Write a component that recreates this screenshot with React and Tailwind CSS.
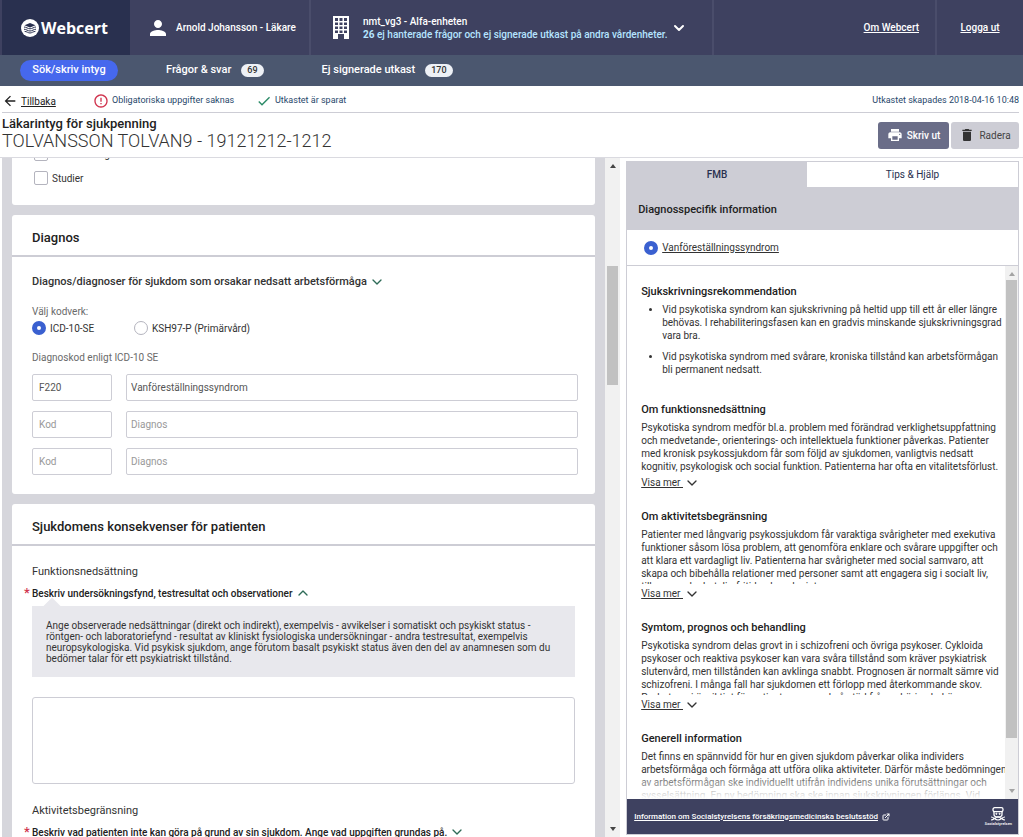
import { MdPerson, MdPrint, MdDelete, MdArrowBack, MdCheck, MdErrorOutline } from 'react-icons/md';
import { ChevronDown, ChevronUp, ExternalLink } from 'lucide-react';

const diagnoses = [
  { id: 1, code: 'F220', name: 'Vanföreställningssyndrom' },
  { id: 2, code: '', name: '' },
  { id: 3, code: '', name: '' },
];

const sections = [
  {
    title: 'Om funktionsnedsättning',
    text: `Psykotiska syndrom medför bl.a. problem med förändrad verklighetsuppfattning
och medvetande-, orienterings- och intellektuela funktioner påverkas. Patienter
med kronisk psykossjukdom får som följd av sjukdomen, vanligtvis nedsatt
kognitiv, psykologisk och social funktion. Patienterna har ofta en vitalitetsförlust.`,
  },
  {
    title: 'Om aktivitetsbegränsning',
    text: `Patienter med långvarig psykossjukdom får varaktiga svårigheter med exekutiva
funktioner såsom lösa problem, att genomföra enklare och svårare uppgifter och
att klara ett vardagligt liv. Patienterna har svårigheter med social samvaro, att
skapa och bibehålla relationer med personer samt att engagera sig i socialt liv,
till exempel arbetsliv, fritid och andra intressen.`,
  },
  {
    title: 'Symtom, prognos och behandling',
    text: `Psykotiska syndrom delas grovt in i schizofreni och övriga psykoser. Cykloida
psykoser och reaktiva psykoser kan vara svåra tillstånd som kräver psykiatrisk
slutenvård, men tillstånden kan avklinga snabbt. Prognosen är normalt sämre vid
schizofreni. I många fall har sjukdomen ett förlopp med återkommande skov.
Psykoterapi är viktigt för patienten men också stöd från anhöriga behövs`,
  },
];

function Logo() {
  return (
    <svg viewBox="0 0 18 18" className="h-[18px] w-[18px] shrink-0" aria-hidden="true">
      <circle cx="9" cy="9" r="9" fill="#fff" />
      <path d="M9 4 14.500 6.200 9 8.400 3.500 6.200Z" fill="#29304f" />
      <path
        d="M3 8c2 0 4 1.800 6 1.800S13 8 15 8M3 10.200c2 0 4 1.800 6 1.800s4-1.800 6-1.800M3.600 12.400c2 0 3.600 1.600 5.400 1.600s3.400-1.600 5.400-1.600"
        fill="none"
        stroke="#29304f"
        strokeWidth="1"
      />
    </svg>
  );
}

function Building() {
  return (
    <svg viewBox="0 0 16 23" className="h-[23px] w-4 shrink-0" aria-hidden="true">
      <path
        fill="#fff"
        fillRule="evenodd"
        d="M0 0h16v23h-5v-5H5v5H0ZM2 2v3h3V2ZM6.5 2v3h3V2ZM11 2v3h3V2ZM2 6.5v2.5h3V6.5ZM6.5 6.5v2.5h3V6.5ZM11 6.5v2.5h3V6.5ZM2 10.500v2.500h3v-2.500ZM6.500 10.500v2.500h3v-2.500ZM11 10.500v2.500h3v-2.500ZM2 14.500v2.500h3v-2.500ZM6.500 14.500v2.500h3v-2.500ZM11 14.500v2.500h3v-2.500Z"
      />
    </svg>
  );
}

function Crest() {
  return (
    <svg viewBox="0 0 16 14" className="h-[14px] w-4" fill="none" stroke="#fff" aria-hidden="true">
      <rect x="3" y="0.700" width="10" height="4" rx="1.600" strokeWidth="1.300" />
      <path d="M4 4.700v2.800c0 1.500 1.500 2.500 4 2.500s4-1 4-2.500V4.700" strokeWidth="1.300" />
      <circle cx="6.400" cy="6.800" r="0.600" fill="#fff" />
      <circle cx="9.600" cy="6.800" r="0.600" fill="#fff" />
      <path d="M1 10c3 0 4 3 7 3s4-3 7-3M1 13c3 0 4-3 7-3s4 3 7 3" strokeWidth="1.200" />
    </svg>
  );
}

function Radio({ label, name, checked, className = '' }) {
  return (
    <label className={`flex items-center gap-1 text-[10px] ${className}`}>
      <input
        type="radio"
        name={name}
        defaultChecked={checked}
        className="h-[14px] w-[14px] shrink-0 appearance-none rounded-full border border-[#b4b4be] bg-white checked:border-[5px] checked:border-[#3a60d0]"
      />
      {label}
    </label>
  );
}

function Checkbox({ label }) {
  return (
    <label className="flex h-6 shrink-0 items-center gap-1 text-[10px]">
      <input type="checkbox" className="h-[14px] w-[14px] shrink-0 appearance-none rounded-[2px] border border-[#b4b4be] bg-white" />
      {label}
    </label>
  );
}

function Card({ title, children }) {
  return (
    <section className="rounded-[3px] bg-white">
      <h2 className="flex h-[42px] items-center border-b-2 border-[#cdcdd5] px-5 pt-1.5 text-[13px] font-medium text-[#212121]">{title}</h2>
      {children}
    </section>
  );
}

function Question({ children, open }) {
  return (
    <div className="-ml-2 mt-[5px] flex h-4 items-center text-[10px] font-medium whitespace-nowrap text-[#212121]">
      <span className="w-2 text-[13px] leading-4 text-[#d0334d]">*</span>
      {children}
      {open ? <ChevronUp className="ml-0.5 h-4 w-4 text-[#2e6b57]" /> : <ChevronDown className="ml-0.5 h-4 w-4 text-[#2e6b57]" />}
    </div>
  );
}

export default function App() {
  return (
    <div className="flex h-screen flex-col overflow-hidden bg-white font-['Roboto',sans-serif] text-[#333]">
      <header className="flex h-[55px] shrink-0 bg-[#3e4160] text-[10px] font-medium text-white">
        <div className="ml-0.5 flex w-32 items-center gap-0.5 bg-[#29304f] pl-[19px]">
          <Logo />
          <span className="font-['Open_Sans',sans-serif] text-base font-bold">Webcert</span>
        </div>
        <div className="flex w-[181px] items-center gap-1.5 border-r-2 border-[#4a4d6b] pl-4">
          <MdPerson className="h-6 w-6" />
          <span>Arnold Johansson - Läkare</span>
        </div>
        <div className="flex w-[403px] items-center border-r-2 border-[#4a4d6b] pl-[22px]">
          <Building />
          <div className="ml-3.5 leading-[13px]">
            <div>nmt_vg3 - Alfa-enheten</div>
            <div className="text-[#b5e4ff]">
              <b>26</b> ej hanterade frågor och ej signerade utkast på andra vårdenheter.
            </div>
          </div>
          <button type="button" aria-label="Byt enhet" className="ml-1">
            <ChevronDown className="h-4 w-4" strokeWidth={3} />
          </button>
        </div>
        <div className="flex flex-1 items-center justify-end border-r-2 border-[#4a4d6b] pr-4">
          <a href="#om" className="underline">Om Webcert</a>
        </div>
        <div className="flex w-[86px] items-center justify-center">
          <a href="#logout" className="underline">Logga ut</a>
        </div>
      </header>

      <nav className="flex h-[31px] shrink-0 items-center bg-[#4b576f] pl-5 text-[11px] font-medium text-white">
        <a href="#sok" className="flex h-[21px] w-[98px] items-center justify-center rounded-full bg-[#4668ed]">Sök/skriv intyg</a>
        <a href="#fragor" className="ml-12 flex items-center gap-2.5">
          Frågor &amp; svar
          <span className="rounded-full bg-[#eef1f6] px-1.5 text-[9px] leading-[13px] text-[#333]">69</span>
        </a>
        <a href="#utkast" className="ml-[58px] flex items-center gap-2.5">
          Ej signerade utkast
          <span className="rounded-full bg-[#eef1f6] px-1.5 text-[9px] leading-[13px] text-[#333]">170</span>
        </a>
      </nav>

      <div className="ml-0.5 mr-1 flex h-[27px] shrink-0 items-center border-b border-[#cdcdd5] pt-1 text-[9px] text-[#28486b]">
        <a href="#tillbaka" className="flex w-[91px] items-center gap-[3px] text-[10px] text-[#212121]">
          <MdArrowBack className="h-4 w-4" />
          <span className="underline">Tillbaka</span>
        </a>
        <span className="flex w-[163px] items-center gap-[3px]">
          <MdErrorOutline className="h-4 w-4 text-[#d0334d]" />
          Obligatoriska uppgifter saknas
        </span>
        <span className="flex items-center gap-[3px]">
          <MdCheck className="h-4 w-4 text-[#2a8a66]" />
          Utkastet är sparat
        </span>
        <span className="ml-auto">Utkastet skapades 2018-04-16 10:48</span>
      </div>

      <div className="flex h-[45px] shrink-0 items-center border-b border-[#dadae0] pl-0.5 pr-1">
        <div className="pb-1">
          <h1 className="text-[13px] leading-4 font-medium text-[#212121]">Läkarintyg för sjukpenning</h1>
          <div className="text-lg leading-[18px] font-light text-[#333]">TOLVANSSON TOLVAN9 - 19121212-1212</div>
        </div>
        <button type="button" className="ml-auto flex h-[27px] w-[71px] items-center justify-center gap-1 rounded-[3px] bg-[#6a6d88] text-[10px] font-medium text-white">
          <MdPrint className="h-4 w-4" />
          Skriv ut
        </button>
        <button type="button" className="ml-0.5 flex h-[27px] w-[68px] items-center justify-center gap-1 rounded-[3px] bg-[#cdcdd5] text-[10px] text-[#444]">
          <MdDelete className="h-4 w-4 text-[#333]" />
          Radera
        </button>
      </div>

      <main className="flex min-h-0 flex-1">
        <div className="ml-0.5 flex min-w-0 flex-1 flex-col gap-2.5 overflow-hidden bg-[#d6d6dc] px-2.5">
          <div className="flex h-[47px] shrink-0 flex-col justify-end overflow-hidden rounded-b-[3px] bg-white px-[22px] pb-[15px]">
            <Checkbox label="Föräldraledighet för vård av barn" />
            <Checkbox label="Studier" />
          </div>

          <Card title="Diagnos">
            <div className="flex flex-col px-5 pb-[19px] pt-[17px]">
              <h3 className="flex h-4 items-center gap-0.5 text-[11px] font-medium">
                Diagnos/diagnoser för sjukdom som orsakar nedsatt arbetsförmåga
                <ChevronDown className="h-4 w-4 text-[#2e6b57]" />
              </h3>
              <div className="mt-3.5 text-[10px] leading-4 text-[#6a6a6a]">Välj kodverk:</div>
              <div className="flex h-4 items-center">
                <Radio name="kodverk" label="ICD-10-SE" checked className="w-[102px]" />
                <Radio name="kodverk" label="KSH97-P (Primärvård)" />
              </div>
              <div className="mt-3.5 text-[10px] leading-4 text-[#6a6a6a]">Diagnoskod enligt ICD-10 SE</div>
              <div className="-mr-[3px] mt-2 flex flex-col gap-2.5">
                {diagnoses.map((d) => (
                  <div key={d.id} className="flex gap-3.5 text-[10px] text-[#555]">
                    <input
                      aria-label="Kod"
                      placeholder="Kod"
                      defaultValue={d.code}
                      className="h-[27px] w-20 rounded-[2px] border border-[#cdcdd5] px-1.5 placeholder:text-[#999]"
                    />
                    <input
                      aria-label="Diagnos"
                      placeholder="Diagnos"
                      defaultValue={d.name}
                      className="h-[27px] min-w-0 flex-1 rounded-[2px] border border-[#cdcdd5] px-1 placeholder:text-[#999]"
                    />
                  </div>
                ))}
              </div>
            </div>
          </Card>

          <Card title="Sjukdomens konsekvenser för patienten">
            <div className="px-5 pb-5 pt-[18px]">
              <h3 className="text-[11px] leading-4">Funktionsnedsättning</h3>
              <Question open>Beskriv undersökningsfynd, testresultat och observationer</Question>
              <div className="relative mt-[5px] bg-[#e8e8ed] px-3.5 pb-[13px] pt-3.5 text-[10px] leading-[11px] whitespace-pre-line">
                <div className="absolute -top-1.5 left-3.5 h-3 w-3 rotate-45 bg-[#e8e8ed]"></div>
                {`Ange observerade nedsättningar (direkt och indirekt), exempelvis - avvikelser i somatiskt och psykiskt status -
röntgen- och laboratoriefynd - resultat av kliniskt fysiologiska undersökningar - andra testresultat, exempelvis
neuropsykologiska. Vid psykisk sjukdom, ange förutom basalt psykiskt status även den del av anamnesen som du
bedömer talar för ett psykiatriskt tillstånd.`}
              </div>
              <textarea
                aria-label="Funktionsnedsättning"
                className="mt-5 block h-[87px] w-full resize-none rounded-[3px] border border-[#cdcdd5] p-1.5 text-[10px]"
              />
              <h3 className="mt-[19px] text-[11px] leading-4">Aktivitetsbegränsning</h3>
              <Question>Beskriv vad patienten inte kan göra på grund av sin sjukdom. Ange vad uppgiften grundas på.</Question>
            </div>
          </Card>
        </div>

        <div className="flex w-[15px] shrink-0 flex-col items-center bg-[#f1f1f1]">
          <div className="mt-1.5 border-x-[3px] border-b-[4px] border-x-transparent border-b-[#444]"></div>
          <div className="mt-[98px] h-[119px] w-[11px] bg-[#c1c1c1]"></div>
          <div className="mt-auto mb-1.5 border-x-[3px] border-t-[4px] border-x-transparent border-t-[#444]"></div>
        </div>

        <aside className="mb-0.5 ml-1.5 mr-1 mt-[3px] flex w-[38.4%] shrink-0 flex-col border border-[#cdcdd5]">
          <div className="flex h-[25px] shrink-0 bg-[#cdcdd5] text-[10px] text-[#28304f]">
            <button type="button" className="flex-[180] font-medium">FMB</button>
            <button type="button" className="flex-[211] bg-white">Tips &amp; Hjälp</button>
          </div>
          <h2 className="flex h-[43px] shrink-0 items-center bg-[#cdcdd5] px-[11px] pt-[3px] text-[11px] font-medium text-[#212121]">
            Diagnosspecifik information
          </h2>
          <div className="flex h-9 shrink-0 items-center border-b border-[#cdcdd5] pl-[17px]">
            <Radio name="fmb" label={<span className="underline">Vanföreställningssyndrom</span>} checked />
          </div>

          <div className="flex min-h-0 flex-1">
            <div className="relative min-w-0 flex-1 overflow-hidden pl-3.5 pt-[18px] text-[10px] leading-[13px] whitespace-nowrap">
              <h3 className="text-[11px] leading-4 font-medium text-[#212121]">Sjukskrivningsrekommendation</h3>
              <ul className="ml-[21px] mt-[3px] list-disc whitespace-pre">
                <li>{`Vid psykotiska syndrom kan sjukskrivning på heltid upp till ett år eller längre
behövas. I rehabiliteringsfasen kan en gradvis minskande sjukskrivningsgrad
vara bra.`}</li>
                <li className="mt-2">{`Vid psykotiska syndrom med svårare, kroniska tillstånd kan arbetsförmågan
bli permanent nedsatt.`}</li>
              </ul>
              <div className="mt-[26px] flex flex-col gap-5">
                {sections.map((s) => (
                  <section key={s.title}>
                    <h3 className="text-[11px] leading-4 font-medium text-[#212121]">{s.title}</h3>
                    <p className="mt-[3px] max-h-14 overflow-hidden whitespace-pre">{s.text}</p>
                    <a href="#visa" className="mt-[3px] flex h-[13px] items-center gap-px">
                      <span className="underline">Visa mer&nbsp;</span>
                      <ChevronDown className="h-4 w-4" />
                    </a>
                  </section>
                ))}
                <section>
                  <h3 className="text-[11px] leading-4 font-medium text-[#212121]">Generell information</h3>
                  <p className="mt-[3px] whitespace-pre">{`Det finns en spännvidd för hur en given sjukdom påverkar olika individers
arbetsförmåga och förmåga att utföra olika aktiviteter. Därför måste bedömningen
av arbetsförmågan ske individuellt utifrån individens unika förutsättningar och
sysselsättning. En ny bedömning ska ske innan sjukskrivningen förlängs. Vid`}</p>
                </section>
              </div>
              <div className="absolute inset-x-0 bottom-0 h-7 bg-linear-to-b from-white/0 to-white"></div>
            </div>
            <div className="flex w-[13px] shrink-0 flex-col items-center bg-[#f1f1f1]">
              <div className="mt-1.5 border-x-[3px] border-b-[4px] border-x-transparent border-b-[#a3a3a3]"></div>
              <div className="mt-1 w-[11px] flex-1 bg-[#c1c1c1]"></div>
              <div className="mb-1.5 mt-[51px] border-x-[3px] border-t-[4px] border-x-transparent border-t-[#a3a3a3]"></div>
            </div>
          </div>

          <footer className="flex h-[35px] shrink-0 items-center justify-between bg-[#3e4160] pl-[7px] pr-1.5 text-[8px] font-medium text-white">
            <a href="#socialstyrelsen" className="flex items-center gap-1">
              <span className="underline">Information om Socialstyrelsens försäkringsmedicinska beslutsstöd</span>
              <ExternalLink className="h-2 w-2" strokeWidth={3} />
            </a>
            <div className="flex flex-col items-center">
              <Crest />
              <span className="text-[4px] leading-[5px]">Socialstyrelsen</span>
            </div>
          </footer>
        </aside>
      </main>
    </div>
  );
}
